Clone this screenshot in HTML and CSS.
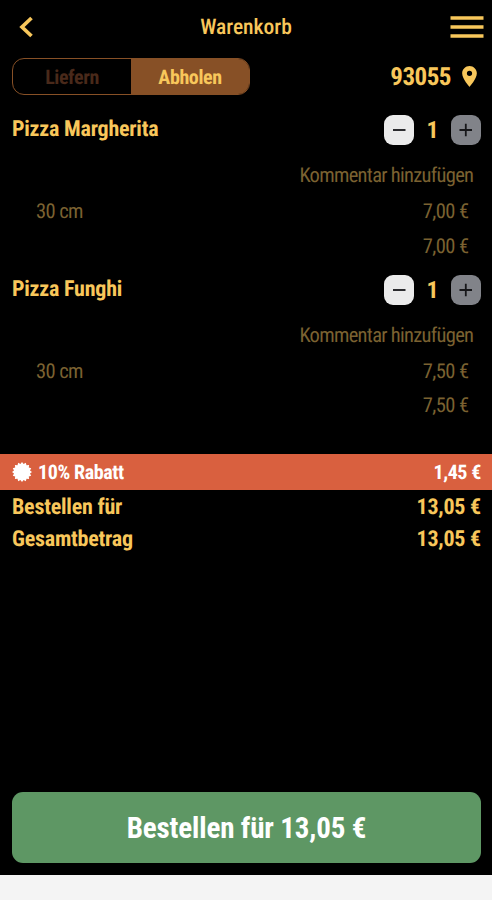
FILE: index.html
```html
<!DOCTYPE html>
<html lang="de">
<head>
<meta charset="utf-8">
<title>Warenkorb</title>
<link rel="stylesheet" href="styles.css">
</head>
<body>
<main class="app">
  <header class="topbar">
    <svg class="back" viewBox="0 0 16 24"><path d="M13.500 3 4 12l9.500 9"/></svg>
    <h1 class="title">Warenkorb</h1>
    <svg class="menu" viewBox="0 0 34 22"><path d="M.5 2h33M.5 11h33M.5 20h33"/></svg>
  </header>
  <div class="mode">
    <div class="switch"><span class="option">Liefern</span><span class="option active">Abholen</span></div>
    <div class="place"><span class="zip">93055</span><svg class="pin" viewBox="5 2 14 20"><path fill-rule="evenodd" d="M12 2C8.130 2 5 5.130 5 9c0 5.250 7 13 7 13s7-7.750 7-13c0-3.870-3.130-7-7-7zm0 9.500a2.500 2.500 0 1 1 0-5 2.500 2.500 0 0 1 0 5z"/></svg></div>
  </div>
  <section class="item">
    <div class="head"><h2 class="name">Pizza Margherita</h2>
      <div class="stepper">
        <button class="step"><svg viewBox="0 0 30 30"><path d="M9 15h12.500"/></svg></button>
        <span class="count">1</span>
        <button class="step plus"><svg viewBox="0 0 30 30"><path d="M8.500 15h12.500M14.800 8.700v12.500"/></svg></button>
      </div>
    </div>
    <div class="comment">Kommentar hinzufügen</div>
    <div class="line"><span>30 cm</span><span>7,00 €</span></div>
    <div class="line"><span></span><span>7,00 €</span></div>
  </section>
  <section class="item">
    <div class="head"><h2 class="name">Pizza Funghi</h2>
      <div class="stepper">
        <button class="step"><svg viewBox="0 0 30 30"><path d="M9 15h12.500"/></svg></button>
        <span class="count">1</span>
        <button class="step plus"><svg viewBox="0 0 30 30"><path d="M8.500 15h12.500M14.800 8.700v12.500"/></svg></button>
      </div>
    </div>
    <div class="comment">Kommentar hinzufügen</div>
    <div class="line"><span>30 cm</span><span>7,50 €</span></div>
    <div class="line"><span></span><span>7,50 €</span></div>
  </section>
  <div class="discount">
    <span class="label"><svg class="badge" viewBox="-10 -10 20 20"><path d="M0-10 1.600-8 3.800-9.200 4.500-6.800 7.100-7.100 6.800-4.500 9.200-3.800 8-1.600 10 0 8 1.600 9.200 3.800 6.800 4.500 7.100 7.100 4.500 6.800 3.800 9.200 1.600 8 0 10-1.600 8-3.800 9.200-4.500 6.800-7.100 7.100-6.800 4.500-9.200 3.800-8 1.600-10 0-8-1.600-9.200-3.800-6.800-4.500-7.100-7.100-4.500-6.800-3.800-9.200-1.600-8z"/></svg>10% Rabatt</span>
    <span>1,45 €</span>
  </div>
  <div class="sum"><span>Bestellen für</span><span>13,05 €</span></div>
  <div class="sum"><span>Gesamtbetrag</span><span>13,05 €</span></div>
  <button class="order">Bestellen für 13,05 €</button>
</main>
</body>
</html>
```
FILE: styles.css
```css
* { box-sizing: border-box; }
body {
  margin: 0;
  background: #f4f4f4;
  font-family: "Roboto Condensed", Roboto, sans-serif;
  font-stretch: 75%;
  font-size: 20.5px;
  text-rendering: geometricPrecision;
}
h1, h2 { margin: 0; }
button { border: 0; padding: 0; font: inherit; font-stretch: 75%; }
.app {
  display: flex;
  flex-direction: column;
  height: 875px;
  background: #000;
  color: #f8c75b;
}
.topbar {
  display: grid;
  grid-template-columns: 1fr auto 1fr;
  align-items: center;
  height: 54px;
  padding: 0 8px;
}
.back { width: 16px; height: 24px; margin-left: 10px; fill: none; stroke: #f8c75b; stroke-width: 3.700; }
.menu { justify-self: end; width: 34px; height: 22px; stroke: #f8c75b; stroke-width: 3.300; }
.title { font-size: 21.5px; font-weight: 500; line-height: 24px; padding-top: 2px; }
.mode {
  display: flex;
  justify-content: space-between;
  align-items: center;
  height: 45px;
  padding: 0 15px 0 12px;
}
.switch {
  display: grid;
  grid-template-columns: 1fr 1fr;
  width: 238px;
  height: 37px;
  border: 1.500px solid #875026;
  border-radius: 12px;
  overflow: hidden;
  line-height: 36px;
  text-align: center;
  font-size: 20px;
  font-weight: 700;
  letter-spacing: -.4px;
}
.option { color: #49291a; }
.option.active { background: #875026; color: #f8c75b; }
.place { display: flex; align-items: center; gap: 11px; font-size: 25px; font-weight: 700; letter-spacing: -.5px; }
.zip { padding-top: 2px; }
.pin { width: 15px; height: 21px; fill: #f8c75b; }
.item { height: 159.5px; padding: 12px 11px 0 12px; }
.head { display: flex; justify-content: space-between; height: 38px; }
.name { font-size: 22px; font-weight: 700; line-height: 38px; letter-spacing: -.22px; }
.stepper { display: grid; grid-template-columns: 30px 37px 30px; height: 38px; align-items: center; text-align: center; }
.step { height: 30px; border-radius: 9px; background: #ebebeb; }
.step.plus { background: #818389; }
.step svg { display: block; width: 30px; height: 30px; stroke: #17171a; stroke-width: 1.800; }
.count { font-size: 24px; font-weight: 700; }
.comment { margin-top: 9px; padding-right: 7.7px; line-height: 36px; text-align: right; color: #7b6231; letter-spacing: -.7px; }
.line { display: flex; justify-content: space-between; height: 34.5px; line-height: 36px; padding: 0 12.6px 0 24px; color: #7b6231; letter-spacing: -.6px; }
.discount {
  display: flex;
  justify-content: space-between;
  align-items: center;
  height: 36px;
  margin-top: 36px;
  padding: 0 11px 0 12px;
  background: #d9603f;
  color: #fff;
  font-size: 20px;
  font-weight: 700;
  line-height: 37px;
  letter-spacing: -.4px;
}
.label { display: flex; align-items: center; gap: 6px; }
.badge { width: 20px; height: 20px; fill: #fff; }
.sum { display: flex; justify-content: space-between; height: 32px; line-height: 36px; padding: 0 11px 0 12px; font-size: 22px; font-weight: 700; letter-spacing: -.22px; }
.order {
  height: 71px;
  margin: auto 11px 12px 12px;
  border-radius: 11px;
  background: #5e9764;
  color: #fff;
  font-size: 29px;
  font-weight: 700;
  letter-spacing: -.15px;
}
```
